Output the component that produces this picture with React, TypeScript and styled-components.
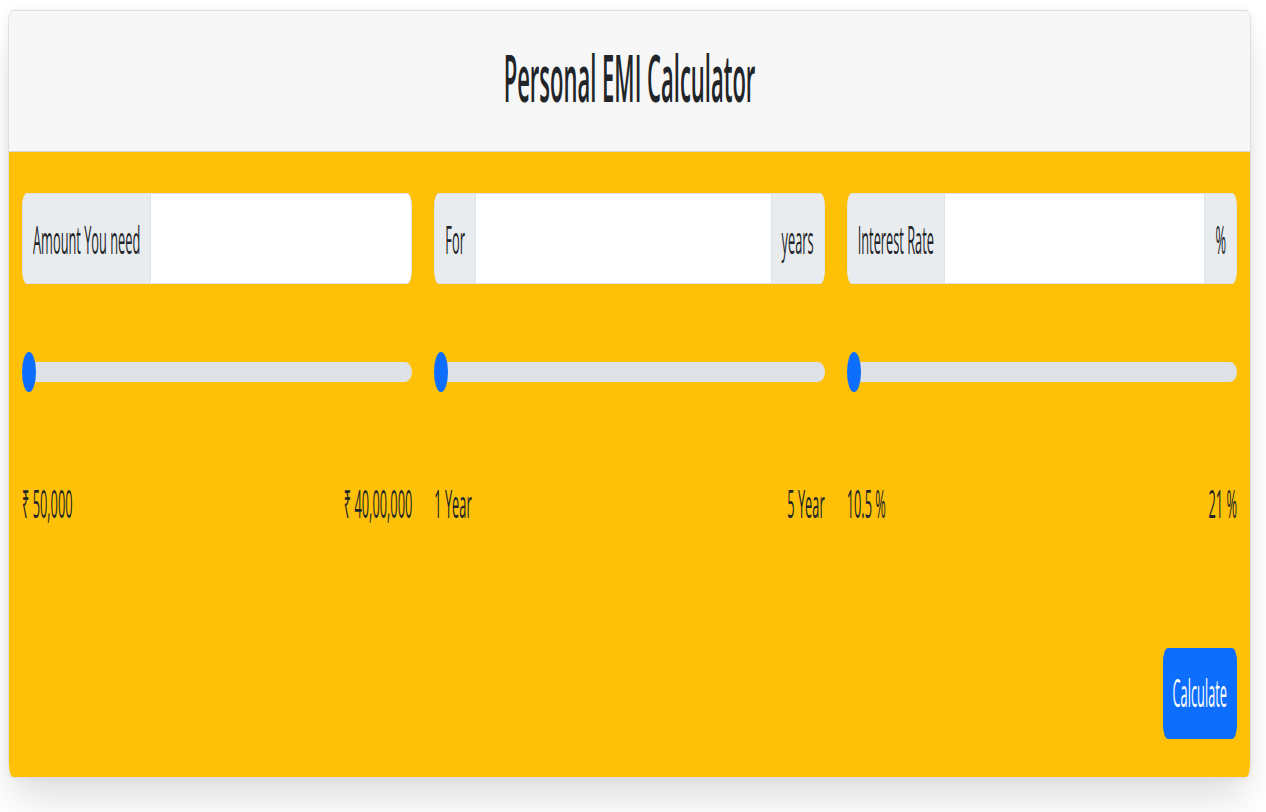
import React from "react";
import styled, { createGlobalStyle } from "styled-components";

const GlobalStyle = createGlobalStyle`
  html, body { margin: 0; padding: 0; background: #ffffff; }
  body {
    font-family: "Open Sans", "Noto Sans", "DejaVu Sans", sans-serif;
    color: #212529;
  }
  * { box-sizing: border-box; }
`;

const Page = styled.div`
  height: 812px;
  padding: 10px 15px 0 8px;
  overflow: hidden;
`;

const Card = styled.section`
  border: 1px solid rgba(0, 0, 0, 0.13);
  border-radius: 5px / 14px;
  overflow: hidden;
  box-shadow: 0 26px 36px -6px rgba(0, 0, 0, 0.13), 0 0 8px rgba(0, 0, 0, 0.06);
`;

const Header = styled.header`
  height: 141px;
  padding-bottom: 12px;
  background: #f7f7f7;
  border-bottom: 1px solid rgba(0, 0, 0, 0.13);
  display: flex;
  align-items: center;
  justify-content: center;
`;

const Title = styled.h3`
  margin: 0;
  font-weight: 600;
  line-height: 1;
  color: #212529;
`;

const Tall = styled.span<{ $size: number; $sy: number }>`
  display: inline-block;
  font-size: ${(p) => p.$size}px;
  line-height: 1;
  white-space: nowrap;
  transform: scaleY(${(p) => p.$sy});
`;

const Body = styled.div`
  background: #ffc107;
  padding: 41px 13px 38px;
`;

const Grid = styled.div`
  display: grid;
  grid-template-columns: repeat(3, 1fr);
  column-gap: 22px;
`;

const Column = styled.div`
  display: flex;
  flex-direction: column;
  min-width: 0;
`;

const InputGroup = styled.div`
  display: flex;
  height: 91px;
  border: 1px solid #dee2e6;
  border-radius: 5px / 14px;
  overflow: hidden;
  background: #ffffff;
`;

const Addon = styled.span<{ $side: "start" | "end" }>`
  display: flex;
  align-items: center;
  padding: 4px 10px 0;
  background: #e9ecef;
  color: #212529;
  ${(p) =>
    p.$side === "start"
      ? "border-right: 1px solid #dee2e6;"
      : "border-left: 1px solid #dee2e6;"}
`;

const Field = styled.input`
  flex: 1;
  min-width: 0;
  border: none;
  outline: none;
  background: #ffffff;
  padding: 0 10px;
  font: inherit;
`;

const Range = styled.input`
  -webkit-appearance: none;
  appearance: none;
  display: block;
  width: 100%;
  height: 40px;
  margin: 68px 0 0;
  padding: 0;
  background: transparent;

  &::-webkit-slider-runnable-track {
    height: 20px;
    background: #dee2e6;
    border-radius: 7px / 10px;
  }
  &::-webkit-slider-thumb {
    -webkit-appearance: none;
    appearance: none;
    width: 14px;
    height: 40px;
    margin-top: -10px;
    border: none;
    border-radius: 50%;
    background: #0d6efd;
  }
  &::-moz-range-track {
    height: 20px;
    background: #dee2e6;
    border-radius: 7px / 10px;
  }
  &::-moz-range-thumb {
    width: 14px;
    height: 40px;
    border: none;
    border-radius: 50%;
    background: #0d6efd;
  }
`;

const Limits = styled.div`
  display: flex;
  align-items: center;
  justify-content: space-between;
  height: 40px;
  margin-top: 92px;
  color: #212529;
`;

const ButtonRow = styled.div`
  display: flex;
  justify-content: flex-end;
  margin-top: 124px;
`;

const Button = styled.button`
  height: 91px;
  padding: 0 10px;
  border: none;
  border-radius: 5px / 14px;
  background: #0d6efd;
  color: #ffffff;
  font: inherit;
  cursor: pointer;
  display: flex;
  align-items: center;
`;

const LABEL = 12.8;
const SY = 2.95;

type FieldSpec = {
  prefix: string;
  suffix?: string;
  min: number;
  max: number;
  step: number;
  minLabel: string;
  maxLabel: string;
};

const fields: FieldSpec[] = [
  { prefix: "Amount You need", min: 50000, max: 4000000, step: 1000, minLabel: "₹ 50,000", maxLabel: "₹ 40,00,000" },
  { prefix: "For", suffix: "years", min: 1, max: 5, step: 1, minLabel: "1 Year", maxLabel: "5 Year" },
  { prefix: "Interest Rate", suffix: "%", min: 10.5, max: 21, step: 0.5, minLabel: "10.5 %", maxLabel: "21 %" },
];

export default function App() {
  return (
    <>
      <GlobalStyle />
      <Page>
        <Card>
          <Header>
            <Title>
              <Tall $size={22} $sy={2.99}>Personal EMI Calculator</Tall>
            </Title>
          </Header>
          <Body>
            <Grid>
              {fields.map((f) => (
                <Column key={f.prefix}>
                  <InputGroup>
                    <Addon $side="start">
                      <Tall $size={LABEL} $sy={SY}>{f.prefix}</Tall>
                    </Addon>
                    <Field type="text" aria-label={f.prefix} />
                    {f.suffix && (
                      <Addon $side="end">
                        <Tall $size={LABEL} $sy={SY}>{f.suffix}</Tall>
                      </Addon>
                    )}
                  </InputGroup>
                  <Range type="range" min={f.min} max={f.max} step={f.step} defaultValue={f.min} aria-label={`${f.prefix} slider`} />
                  <Limits>
                    <Tall $size={LABEL} $sy={SY}>{f.minLabel}</Tall>
                    <Tall $size={LABEL} $sy={SY}>{f.maxLabel}</Tall>
                  </Limits>
                </Column>
              ))}
            </Grid>
            <ButtonRow>
              <Button type="button">
                <Tall $size={LABEL} $sy={SY}>Calculate</Tall>
              </Button>
            </ButtonRow>
          </Body>
        </Card>
      </Page>
    </>
  );
}
